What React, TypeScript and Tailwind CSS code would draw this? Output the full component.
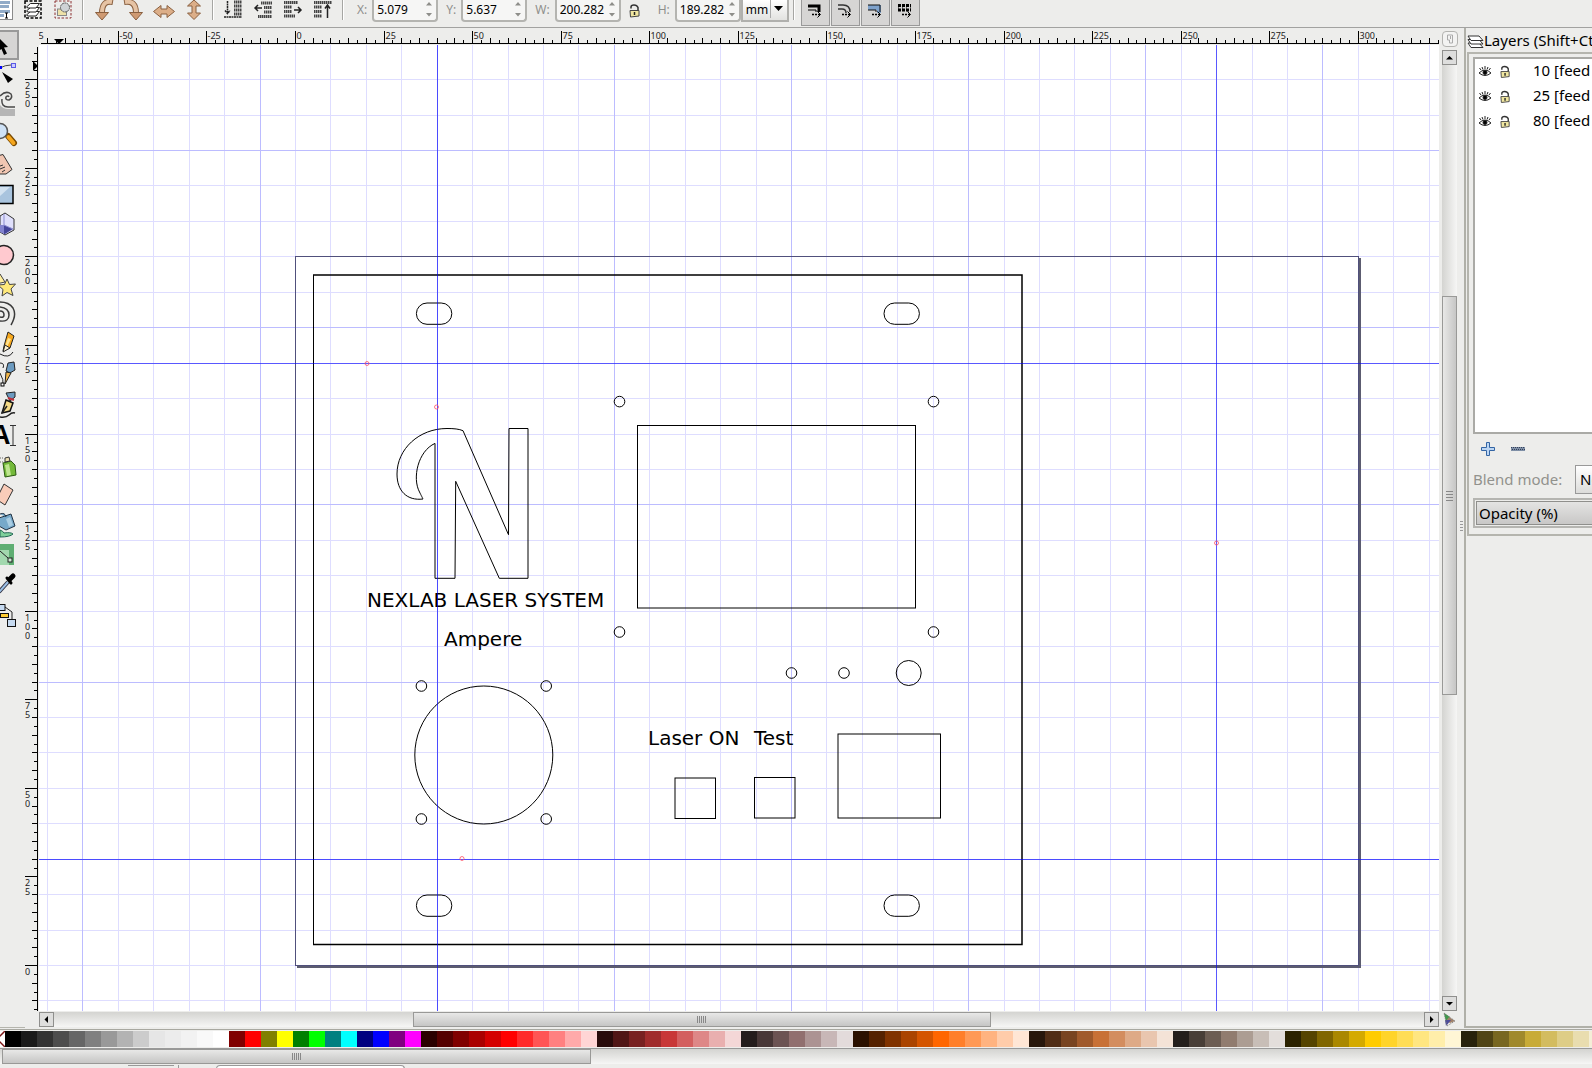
// Vector editor window: tool controls, toolbox, drawing canvas, layers dock and palette.

import { Fragment } from "react";
import type { ReactNode } from "react";

const PX_PER_MM = 3.543;
const ORIGIN_X = 256.5;
const PAGE_TOP = 211.85;
const PAGE_HEIGHT_MM = 200;
const SANS = "font-['Noto_Sans','Open_Sans',sans-serif]";

const SWATCHES = [
  "#000000", "#1a1a1a", "#333333", "#4d4d4d", "#666666", "#808080", "#999999", "#b3b3b3",
  "#cccccc", "#e6e6e6", "#ececec", "#f2f2f2", "#f9f9f9", "#ffffff",
  "#800000", "#ff0000", "#808000", "#ffff00", "#008000", "#00ff00",
  "#008080", "#00ffff", "#000080", "#0000ff", "#800080", "#ff00ff",
  "#2b0000", "#550000", "#800000", "#aa0000", "#d40000", "#ff0000", "#ff2a2a", "#ff5555",
  "#ff8080", "#ffaaaa", "#ffd5d5",
  "#280b0b", "#501616", "#782121", "#a02c2c", "#c83737", "#d35f5f", "#de8787", "#e9afaf", "#f4d7d7",
  "#241c1c", "#483737", "#6c5353", "#916f6f", "#ac9393", "#c8b7b7", "#e3dbdb",
  "#2b1100", "#552200", "#803300", "#aa4400", "#d45500", "#ff6600", "#ff7f2a", "#ff9955",
  "#ffb380", "#ffccaa", "#ffe6d5",
  "#28170b", "#502d16", "#784421", "#a05a2c", "#c87137", "#d38d5f", "#deaa87", "#e9c6af", "#f4e3d7",
  "#241f1c", "#483e37", "#6c5d53", "#917c6f", "#ac9d93", "#c8beb7", "#e3dedb",
  "#2b2200", "#554400", "#806600", "#aa8800", "#d4aa00", "#ffcc00", "#ffd42a", "#ffdd55",
  "#ffe680", "#ffeeaa", "#fff6d5",
  "#28220b", "#504416", "#786721", "#a0892c", "#c8ab37", "#d3bc5f", "#decd87", "#e9ddaf", "#f4eed7",
];

function range(from: number, to: number) {
  return Array.from({ length: to - from + 1 }, (_, i) => from + i);
}

function xOf(mm: number) {
  return Math.floor(ORIGIN_X + mm * PX_PER_MM) + 0.5;
}

function yOf(mm: number) {
  return Math.floor(PAGE_TOP + (PAGE_HEIGHT_MM - mm) * PX_PER_MM) + 0.5;
}

/* ---------- top tool controls ---------- */

function ToolbarIcon({ label, children }: { label: string; children: ReactNode }) {
  return (
    <button type="button" aria-label={label} className="flex h-[22px] w-[30px] shrink-0 justify-center">
      <svg width="24" height="21" viewBox="-2 0 24 21" fill="none">
        {children}
      </svg>
    </button>
  );
}

function ToolbarSeparator() {
  return (
    <div className="flex h-5 w-[10px] shrink-0 justify-center">
      <div className="w-0.5 border-l border-[#a6a6a3] bg-white" />
    </div>
  );
}

function NumberField({ id, label, value }: { id: string; label: string; value: string }) {
  return (
    <div className="flex shrink-0 items-start gap-[5px]">
      <label htmlFor={id} className="h-[22px] text-xs leading-[19px] text-[#8f8f8b]">
        {label}
      </label>
      <div className="flex h-[22px] w-[66px] rounded-b-sm border-2 border-t-0 border-[#b4b4b0] bg-[#f6f6f5]">
        <input
          id={id}
          defaultValue={value}
          className="h-[19px] w-[50px] bg-transparent pl-[3px] text-xs text-black outline-none"
        />
        <svg width="12" height="19" viewBox="0 0 12 19" fill="#8e8e8a" aria-hidden>
          <path d="M2 5.500h6L5 2zM2 13h6L5 16.500z" />
        </svg>
      </div>
    </div>
  );
}

function LockGlyph() {
  return (
    <>
      <path d="M2 4.500V3q0-2 3-2T9 3.500v3" stroke="#333" strokeWidth="1.500" fill="none" />
      <path d="M1 6.500h9v5.500L1.500 13z" fill="#f1e7a0" stroke="#444" />
      <path d="M5.500 8v3" stroke="#222" strokeWidth="1.500" />
    </>
  );
}

function StackIcon({ direction }: { direction: "bottom" | "down" | "up" | "top" }) {
  return (
    <>
      <g stroke="#444" strokeWidth="3" strokeDasharray="1.500 0.500">
        {direction === "bottom" && <path d="M11 2h8M11 6h8M11 10h8M11 14h8" />}
        {direction === "down" && <path d="M8 3h11M11 7.500h8M11 12h8M5 16.500h14" />}
        {direction === "up" && <path d="M1 2.500h14M1 7h8M1 11.500h8M1 16h11" />}
        {direction === "top" && <path d="M1 2.500h18M1 7h8M1 11.500h8M1 16h8" />}
      </g>
      <g stroke="#222" strokeWidth="1.500">
        {direction === "bottom" && (
          <path d="M4.500 1v12M2 10.500l2.500 3 2.500-3M1 17h18" strokeDasharray="2 0.500" />
        )}
        {direction === "down" && <path d="M9 8H2M5 5L2 8l3 3" />}
        {direction === "up" && <path d="M11 10h7M15 7l3 3-3 3" />}
        {direction === "top" && <path d="M14.500 18V6M12 8.500L14.500 5 17 8.500" />}
      </g>
    </>
  );
}

function TransformToggle({ label, children }: { label: string; children: ReactNode }) {
  return (
    <button
      type="button"
      aria-label={label}
      aria-pressed
      className="mr-px flex h-[26px] w-[29px] shrink-0 items-start justify-center border border-t-0 border-[#999] bg-[#d6d5d4] pt-[3px]"
    >
      <svg width="16" height="16" viewBox="0 0 16 16" fill="none">
        {children}
        <path d="M5 11.500h9" stroke="#000" strokeWidth="1.500" strokeDasharray="2 1" />
        <path d="M10.500 8.500l3 3-3 3" stroke="#000" />
      </svg>
    </button>
  );
}

function ToolControls() {
  return (
    <header className="flex h-7 shrink-0 items-start overflow-hidden border-b border-[#a2a2a0]">
      <button
        type="button"
        aria-label="Edit text"
        className="h-5 w-[13px] shrink-0 border border-l-0 border-t-0 border-[#8b8b8b] bg-white"
      >
        <svg width="12" height="19" viewBox="0 0 12 19">
          <path d="M0 1h10v3H0zM0 5h9v3H0zM0 10h10v3H0zM0 14h4v3H0z" fill="#91abc8" />
          <path d="M6.500 13v5M5 13h3M5 18h3" stroke="#000" />
        </svg>
      </button>
      <div className="w-[5px] shrink-0" />
      <ToolbarIcon label="Select all in layers">
        <rect x="2" y="1" width="16" height="17" stroke="#000" strokeDasharray="3 1.500" strokeWidth="1.500" />
        <g fill="#fff" stroke="#222">
          <path d="M3.500 15l4-3.500h9L13 16H5z" />
          <path d="M3.500 11l4-3.500h9L13 12H5z" />
          <path d="M3.500 7l4-3.500h9L13 8H5z" />
        </g>
      </ToolbarIcon>
      <ToolbarIcon label="Deselect">
        <rect x="2" y="1" width="16" height="17" stroke="#8c3030" strokeDasharray="2.500 1.500" />
        <rect x="4.500" y="9" width="9" height="6.500" fill="#efe2a8" stroke="#888" />
        <circle cx="12" cy="7.500" r="4.500" fill="#cfd3d6" stroke="#555" strokeDasharray="2 0.500" />
      </ToolbarIcon>
      <ToolbarSeparator />
      <ToolbarIcon label="Rotate left">
        <path d="M20 2Q9 0 9 13" stroke="#8a6040" strokeWidth="6" />
        <path d="M19 2Q9 0 9 13" stroke="#e6c3a4" strokeWidth="4" />
        <path d="M2.500 12.500h13L9 20z" fill="#cf9a72" stroke="#8a6040" />
      </ToolbarIcon>
      <ToolbarIcon label="Rotate right">
        <path d="M1 2q12-2 12 11" stroke="#8a6040" strokeWidth="6" />
        <path d="M2 2q11-2 11 11" stroke="#e6c3a4" strokeWidth="4" />
        <path d="M6.500 12.500h13L13 20z" fill="#cf9a72" stroke="#8a6040" />
      </ToolbarIcon>
      <ToolbarIcon label="Flip horizontal">
        <path d="M.5 11.500l7.500-6V9h6V5.500l7.500 6-7.500 6V14H8v3.500z" fill="#dcae88" stroke="#8a6040" />
      </ToolbarIcon>
      <ToolbarIcon label="Flip vertical">
        <path d="M11 0l6.500 6H13v7h4.500L11 19.500 4.500 13H9V6H4.500z" fill="#dcae88" stroke="#8a6040" />
      </ToolbarIcon>
      <ToolbarSeparator />
      <ToolbarIcon label="Lower to bottom"><StackIcon direction="bottom" /></ToolbarIcon>
      <ToolbarIcon label="Lower"><StackIcon direction="down" /></ToolbarIcon>
      <ToolbarIcon label="Raise"><StackIcon direction="up" /></ToolbarIcon>
      <ToolbarIcon label="Raise to top"><StackIcon direction="top" /></ToolbarIcon>
      <ToolbarSeparator />
      <div className="ml-[9px] flex shrink-0 items-start gap-2">
        <NumberField id="pos-x" label="X:" value="5.079" />
        <NumberField id="pos-y" label="Y:" value="5.637" />
        <NumberField id="size-w" label="W:" value="200.282" />
        <button type="button" aria-label="Lock ratio" className="h-[22px] w-[21px]">
          <svg width="12" height="14" viewBox="0 0 12 14"><LockGlyph /></svg>
        </button>
        <div className="flex">
          <NumberField id="size-h" label="H:" value="189.282" />
          <div className="relative h-[22px] w-12 border-2 border-t-0 border-[#b0b0ad] bg-gradient-to-b from-white to-[#e2e2e0]">
            <select
              aria-label="Unit"
              className="block h-[19px] w-full appearance-none pl-[3px] text-xs leading-[19px] text-black outline-none"
            >
              <option>mm</option>
              <option>px</option>
            </select>
            <svg className="pointer-events-none absolute right-0 top-0" width="18" height="18" viewBox="0 0 18 18">
              <path d="M1.500 0v18" stroke="#aaa" />
              <path d="M5 6h9l-4.500 5z" fill="#000" />
            </svg>
          </div>
        </div>
      </div>
      <ToolbarSeparator />
      <div className="w-0.5 shrink-0" />
      <TransformToggle label="Scale stroke width">
        <path d="M1 3h11v6" stroke="#000" strokeWidth="3" />
        <path d="M1 7h8v2" stroke="#000" />
      </TransformToggle>
      <TransformToggle label="Scale rounded corners">
        <path d="M1 2h5q7 0 7 7M1 6h4q4 0 4 4" stroke="#333" strokeWidth="1.500" />
      </TransformToggle>
      <TransformToggle label="Move gradients">
        <path d="M1 2h13v8h-4V7H1z" fill="#7fa2cb" />
        <path d="M1 2h12v7M1 7h8v2" stroke="#111" />
      </TransformToggle>
      <TransformToggle label="Move patterns">
        <path d="M1 2.500h13M1 7h13" stroke="#000" strokeWidth="3" strokeDasharray="3 1" />
        <path d="M1 5h13" stroke="#000" strokeDasharray="1 3" />
      </TransformToggle>
    </header>
  );
}

/* ---------- toolbox ---------- */

// Glyphs are drawn in a 19x30 cell: the left half of the bar runs off the window.
const TOOLS: { name: string; glyph: ReactNode }[] = [
  { name: "Select", glyph: <path d="M0 9l8 8-4 .5 3 6-3 1.500-2.500-6-1.500 1z" fill="#000" /> },
  {
    name: "Edit nodes",
    glyph: (
      <>
        <path d="M0 8q5-3 11-3" stroke="#444" />
        <rect x="11.500" y="3.500" width="4" height="4" fill="#ccf" stroke="#5a5ae6" />
        <path d="M0 6h2v3H0z" fill="#00f" />
        <path d="M2 12l11 7-5 4z" fill="#000" />
      </>
    ),
  },
  {
    name: "Tweak",
    glyph: (
      <>
        <path d="M0 15q3 4 8 4h7v7H0z" fill="#b5b5b5" />
        <path d="M0 6q6-6 11-2 2 4-2 6-4 0-3-3 2-2 3 0M2 9q-1 8 6 8h7" stroke="#4a4a4a" strokeWidth="1.500" />
      </>
    ),
  },
  {
    name: "Zoom",
    glyph: (
      <>
        <path d="M8 16l6 7" stroke="#7a4a00" strokeWidth="6" strokeLinecap="round" />
        <path d="M8.500 17l5 6" stroke="#f5a61d" strokeWidth="4" strokeLinecap="round" />
        <circle cx="0" cy="11" r="7.500" fill="#cfe2f6" stroke="#555" strokeWidth="1.500" />
      </>
    ),
  },
  {
    name: "Measure",
    glyph: (
      <>
        <path d="M-1 5.500L3 4.500l9 15-6 4.500H-1z" fill="#f1c6b2" stroke="#333" />
        <path d="M0 16l3-1M0 19l5-2M2 22l3-2" stroke="#333" />
      </>
    ),
  },
  {
    name: "Rectangle",
    glyph: (
      <>
        <path d="M-1 5.500h14v18H-1z" fill="#a9c4de" stroke="#000" strokeWidth="1.500" />
        <path d="M0 7h10L0 16z" fill="#d3e2f0" />
      </>
    ),
  },
  {
    name: "3D box",
    glyph: (
      <>
        <path d="M0 6l5-3 9 6v11l-9 5-5-3z" fill="#e0e0fb" stroke="#333" />
        <path d="M0 15h4v9l-4-2z" fill="#8383cf" />
        <path d="M4 15l9 4-8 5H4z" fill="#45459a" />
        <path d="M4 4v11l9 4" stroke="#8d8dd0" />
      </>
    ),
  },
  { name: "Ellipse", glyph: <circle cx="4" cy="15" r="9.500" fill="#ffc9cf" stroke="#222" strokeWidth="1.500" /> },
  {
    name: "Star",
    glyph: (
      <>
        <path d="M-4 14l4-10 5 8z" fill="#ffee9c" stroke="#444" />
        <path d="M7 9l2.500 5.500 6-.5-4.500 5 2 6.500-6-3-5 3.500 1-6.500-5-4.500 6.500-.5z" fill="#ffe97a" stroke="#444" />
      </>
    ),
  },
  {
    name: "Spiral",
    glyph: <path d="M0 17q4 1 4-2 0-4-4-4M0 21q9 1 9-6T0 7M11 25q6-10 2-17-4-6-13-6" stroke="#3a3a3a" strokeWidth="1.500" />,
  },
  {
    name: "Pencil",
    glyph: (
      <>
        <path d="M4 16L8 2l6 4-4 12-7 3z" fill="#f7a81c" stroke="#222" />
        <path d="M8 8l3 1-4 8-2-1z" fill="#ffe28c" />
        <path d="M5 15l5 3-7 4z" fill="#fff1cf" stroke="#222" />
        <path d="M0 24q9 5 13-2" stroke="#222" />
      </>
    ),
  },
  {
    name: "Bezier",
    glyph: (
      <>
        <path d="M8 3l6-1 1 8-5 3-4-2z" fill="#6c9bc0" stroke="#222" />
        <path d="M6 12l5 1-6 11z" fill="#f2b749" stroke="#222" />
        <path d="M0 3q5 0 3 5M0 13q4 7 3 12" stroke="#222" />
        <rect x="1" y="23" width="3" height="3" fill="#fff" stroke="#000" />
      </>
    ),
  },
  {
    name: "Calligraphy",
    glyph: (
      <>
        <path d="M6 3l9-1v5l-5 4z" fill="#6c9bc0" stroke="#222" />
        <path d="M8 8l6 2" stroke="#c22f3a" strokeWidth="2" />
        <path d="M6 10l7 3-3 8-8 2z" fill="#f6dc87" stroke="#111" strokeWidth="1.500" />
        <path d="M2 23l5-7M0 27q6 1 9-2t6-2" stroke="#222" strokeWidth="1.500" />
      </>
    ),
  },
  {
    name: "Text",
    glyph: (
      <>
        <text x="-9" y="24" className="font-['Liberation_Sans',sans-serif] text-[27px] font-bold" fill="#000">A</text>
        <path d="M13 6v19M10 5.500h6M10 25.500h6" stroke="#333" />
      </>
    ),
  },
  {
    name: "Spray",
    glyph: (
      <>
        <path d="M3 13l8-2 4 4 1 10-11 2z" fill="#74b93a" stroke="#2c5a12" />
        <path d="M5 15l4-1 2 11-4 1z" fill="#bfe58f" />
        <path d="M5 8l4-1 1 4-5 1z" fill="#eadcae" stroke="#333" />
        <path d="M0 8h3M0 12h3" stroke="#666" strokeDasharray="1 1" />
      </>
    ),
  },
  { name: "Eraser", glyph: <path d="M4 4l9 6-8 15-6-4v-7z" fill="#f9ccb9" stroke="#333" /> },
  {
    name: "Bucket",
    glyph: (
      <>
        <path d="M0 20q3 1 4 3 7-1 9 1-3 3-13 3z" fill="#7ed09a" stroke="#265" />
        <path d="M0 4q5-2 6 3M-1 8l12-4 4 12-9 4-7-4z" fill="#77a9ca" stroke="#234" />
        <path d="M6 9l4-2 3 8-4 2z" fill="#a9cde2" />
      </>
    ),
  },
  {
    name: "Gradient",
    glyph: (
      <>
        <path d="M0 4h14v21H0z" fill="#5fae72" />
        <path d="M0 10h9v15H0z" fill="#a2d8ae" />
        <path d="M0 11l8 7" stroke="#222" />
        <rect x="8" y="18" width="4" height="4" fill="#cfe8d4" stroke="#222" />
      </>
    ),
  },
  {
    name: "Dropper",
    glyph: (
      <>
        <path d="M-1 22l9-10" stroke="#334" strokeWidth="4" />
        <path d="M-1 22l9-10" stroke="#9cc0e6" strokeWidth="2" />
        <path d="M7 8l4 5" stroke="#000" strokeWidth="3" strokeLinecap="round" />
        <path d="M10 9l3-3" stroke="#000" strokeWidth="5" strokeLinecap="round" />
      </>
    ),
  },
  {
    name: "Connector",
    glyph: (
      <>
        <path d="M5 7l7 5v8" stroke="#222" />
        <rect x="-2" y="4.500" width="7" height="6" fill="#c6daf0" stroke="#111" />
        <rect x="0.500" y="13.500" width="8" height="4" fill="#fc3" stroke="#111" />
        <rect x="7.500" y="19.500" width="8" height="7" fill="#c6daf0" stroke="#111" />
      </>
    ),
  },
];

function Toolbox() {
  return (
    <nav aria-label="Toolbox" className="flex w-[25px] shrink-0 flex-col border-b border-[#b5b5ad] pt-0.5">
      {TOOLS.map((tool, index) => (
        <button
          key={tool.name}
          type="button"
          aria-label={tool.name}
          className={
            index === 0
              ? "h-[30px] w-[19px] border-2 border-l-0 border-[#999] bg-[#d6d5d4]"
              : "h-[30px] w-[19px]"
          }
        >
          <svg width="19" height="30" viewBox="0 0 19 30" fill="none" className={index === 0 ? "-mt-0.5" : ""}>
            {tool.glyph}
          </svg>
        </button>
      ))}
    </nav>
  );
}

/* ---------- rulers and canvas ---------- */

function HorizontalRuler() {
  return (
    <svg className={`h-full w-full overflow-hidden ${SANS} text-[9px]`} aria-label="Horizontal ruler">
      <line x1="2" y1="15.500" x2="100%" y2="15.500" stroke="#000" shapeRendering="crispEdges" />
      {range(-30, 129).map((n) => {
        const x = xOf(n * 2.5);
        const major = n % 10 === 0;
        const top = major ? 3 : n % 2 === 0 ? 10 : 12;
        return (
          <Fragment key={n}>
            <line x1={x} y1={top} x2={x} y2="15" stroke="#000" shapeRendering="crispEdges" />
            {major && <text x={x + 1} y="11" fill="#222">{n * 2.5}</text>}
          </Fragment>
        );
      })}
      <path d="M15 11h10l-5 5z" fill="#000" />
    </svg>
  );
}

function VerticalRuler() {
  return (
    <svg className={`h-full w-full overflow-hidden ${SANS} text-[9px]`} aria-label="Vertical ruler">
      <line x1="12.500" y1="2" x2="12.500" y2="100%" stroke="#000" shapeRendering="crispEdges" />
      {range(-5, 103).map((n) => {
        const y = yOf(n * 2.5);
        const major = n % 10 === 0;
        const left = major ? 0 : n % 2 === 0 ? 7 : 9;
        return (
          <Fragment key={n}>
            <line x1={left} y1={y} x2="12" y2={y} stroke="#000" shapeRendering="crispEdges" />
            {major &&
              String(n * 2.5)
                .split("")
                .map((digit, i) => (
                  <text key={i} x="0" y={y + 9 + i * 9} fill="#222">{digit}</text>
                ))}
          </Fragment>
        );
      })}
      <path d="M8 16v10l5-5z" fill="#000" />
    </svg>
  );
}

function Grid() {
  return (
    <g shapeRendering="crispEdges">
      {[false, true].map((major) => (
        <g key={String(major)} stroke={major ? "#bcbcff" : "#deddff"}>
          {range(-7, 32)
            .filter((n) => ((n + 1) % 5 === 0) === major)
            .map((n) => (
              <line key={`x${n}`} x1={xOf(n * 10)} y1="0" x2={xOf(n * 10)} y2="100%" />
            ))}
          {range(-2, 26)
            .filter((n) => ((n - 3) % 5 === 0) === major)
            .map((n) => (
              <line key={`y${n}`} x1="0" y1={yOf(n * 10)} x2="100%" y2={yOf(n * 10)} />
            ))}
        </g>
      ))}
    </g>
  );
}

const HOLES = [
  [580.5, 356.6, 5.3], [894.5, 356.6, 5.3], [580.5, 587, 5.3], [894.5, 587, 5.3],
  [752.5, 628, 5.3], [805, 628, 5.3], [869.7, 628, 12.5],
  [382.4, 641, 5.3], [507.2, 641, 5.3], [382.4, 774, 5.3], [507.2, 774, 5.3],
  [444.8, 710, 69],
];

const SLOTS = [[377.4, 258], [845, 258], [377.4, 850], [845, 850]];

const GUIDE_ANCHORS = [[328, 318.5], [397.5, 362], [423, 813.5], [1177.5, 498]];

function Canvas() {
  return (
    <svg className="h-full w-full overflow-hidden bg-white" aria-label="Drawing">
      <Grid />
      <g shapeRendering="crispEdges">
        <path d="M1321 213v709H258" fill="none" stroke="#5c5c70" strokeWidth="2" />
        <rect x="256.500" y="211.500" width="1063" height="709" fill="none" stroke="#50507c" />
      </g>
      <g fill="none" stroke="#000">
        <path d="M274.500 900V230" />
        <path d="M274 230h709v669.500H274" strokeWidth="1.500" />
        {SLOTS.map(([x, y]) => (
          <rect key={`${x}-${y}`} x={x} y={y} width="35.400" height="21.300" rx="10.600" />
        ))}
        {HOLES.map(([x, y, r]) => (
          <circle key={`${x}-${y}`} cx={x} cy={y} r={r} />
        ))}
        <rect x="598.500" y="380.500" width="278" height="182.500" />
        <rect x="636" y="733" width="40.500" height="40.500" />
        <rect x="715.500" y="732.500" width="40.500" height="40.500" />
        <rect x="799" y="689" width="102.500" height="84" />
        <path d="M424 385.700L469.500 489.700L470 383.500H489V533.300H460.300L416.700 436.300L416 533.300H396V398.400C379 406 373 433 380.500 447C382 450 384 454 384 454C368 456 358 446 358 429C358 404 380 383.500 408 383.500C415 383.500 420 384 424 385.700Z" />
      </g>
      <g className="font-['DejaVu_Sans',sans-serif] text-[20px]" fill="#000">
        <text x="328" y="562">NEXLAB LASER SYSTEM</text>
        <text x="405" y="601">Ampere</text>
        <text x="609" y="700">Laser ON</text>
        <text x="715" y="700">Test</text>
      </g>
      <g stroke="#0000ff" strokeOpacity="0.600" shapeRendering="crispEdges">
        <line x1={xOf(40)} y1="0" x2={xOf(40)} y2="100%" />
        <line x1={xOf(260)} y1="0" x2={xOf(260)} y2="100%" />
        <line x1="0" y1={yOf(170)} x2="100%" y2={yOf(170)} />
        <line x1="0" y1={yOf(30)} x2="100%" y2={yOf(30)} />
      </g>
      <g fill="none" stroke="#ff5566" strokeOpacity="0.800">
        {GUIDE_ANCHORS.map(([x, y]) => (
          <circle key={x} cx={x} cy={y} r="2" />
        ))}
      </g>
    </svg>
  );
}

/* ---------- scrollbars ---------- */

const ARROWS = {
  up: "M3 8.500h7L6.500 5z",
  down: "M3 5h7L6.500 8.500z",
  left: "M8 3v7L4.500 6.500z",
  right: "M5 3v7l3.500-3.500z",
};

function ScrollButton({ direction }: { direction: keyof typeof ARROWS }) {
  return (
    <button
      type="button"
      aria-label={`Scroll ${direction}`}
      className="h-[15px] w-[15px] shrink-0 border border-[#8f8f8d] bg-[#dededd]"
    >
      <svg width="13" height="13" viewBox="0 0 13 13"><path d={ARROWS[direction]} fill="#000" /></svg>
    </button>
  );
}

const H_THUMB =
  "flex items-center justify-center border border-[#999997] bg-gradient-to-b from-[#e8e8e7] to-[#c6c6c5]";

function HorizontalGrip() {
  return (
    <div className="flex h-[7px] gap-px">
      {range(1, 5).map((n) => (
        <div key={n} className="w-px bg-[#888]" />
      ))}
    </div>
  );
}

function EditorArea() {
  return (
    <main className="grid min-w-0 flex-1 grid-cols-[14px_minmax(0,1fr)_25px] grid-rows-[17px_minmax(0,1fr)_17px]">
      <div />
      <HorizontalRuler />
      <div className="row-span-2 flex">
        <div className="flex flex-1 flex-col pl-[3px] pt-[3px]">
          <button
            type="button"
            aria-label="Toggle colour management"
            className="flex h-4 w-4 shrink-0 items-center justify-center rounded-sm border border-[#b3b3b0] bg-[#f3f3f2]"
          >
            <svg width="8" height="10" viewBox="0 0 8 10" fill="none" stroke="#aaa">
              <path d="M6.500 1v8h-3V6H1.500V1z" />
              <path d="M4.500 2v3" />
            </svg>
          </button>
          <div className="mt-[3px] flex min-h-0 w-[15px] flex-1 flex-col bg-gradient-to-r from-[#d4d4d1] to-[#f6f6f5]">
            <ScrollButton direction="up" />
            <div className="flex-[231]" />
            <div className="flex flex-[397] flex-col items-center justify-center gap-0.5 border border-[#999997] bg-gradient-to-r from-[#e8e8e7] to-[#c6c6c5]">
              {range(1, 4).map((n) => (
                <div key={n} className="h-px w-[7px] bg-[#888]" />
              ))}
            </div>
            <div className="flex-[301]" />
            <ScrollButton direction="down" />
          </div>
        </div>
        <div className="flex w-1 flex-col items-start justify-center gap-0.5 pt-3">
          {range(1, 4).map((n) => (
            <div key={n} className="h-px w-[3px] bg-[#999]" />
          ))}
        </div>
      </div>
      <VerticalRuler />
      <Canvas />
      <div />
      <div className="mb-px mt-px flex h-[15px] bg-gradient-to-b from-[#d4d4d1] to-[#f6f6f5]">
        <ScrollButton direction="left" />
        <div className="flex-[359]" />
        <div className={`${H_THUMB} flex-[575]`}>
          <HorizontalGrip />
        </div>
        <div className="flex-[433]" />
        <ScrollButton direction="right" />
      </div>
      <svg width="25" height="17" viewBox="0 0 25 17" aria-hidden>
        <path d="M5 2l6 4-4 5z" fill="#3f9a4c" />
        <path d="M10 6l6 4-5 2-4-2z" fill="#a08068" />
        <path d="M6 9h6l-5 6z" fill="#4c4c9c" />
        <path d="M5 2l11 8-8 5z" fill="none" stroke="#777" strokeDasharray="1 1" />
      </svg>
    </main>
  );
}

/* ---------- layers dock ---------- */

const LAYERS = ["10 [feed", "25 [feed", "80 [feed"];

function LayersDock() {
  return (
    <aside className="w-32 shrink-0 overflow-hidden border-b-2 border-l-2 border-[#b0b0a8] pl-px text-[15px]">
      <h2 className="flex h-6 items-center whitespace-nowrap leading-6">
        <svg width="17" height="16" viewBox="0 0 17 16" fill="#fff" stroke="#333" className="mt-0.5 shrink-0">
          <path d="M1 10l3 4.500h12L12 10z" />
          <path d="M1 6.500L4 11h12l-4-4.500z" />
          <path d="M1 3l3 4.500h12L12 3z" />
        </svg>
        <span>Layers (Shift+Ctrl+L)</span>
      </h2>
      <div className="h-[484px] w-60 border-2 border-[#b5b5ae] pl-1 pt-[3px]">
        <ul className="h-[377px] border-2 border-[#aaaaa6] bg-white">
          {LAYERS.map((layer) => (
            <li key={layer} className="flex h-[25px] items-center whitespace-nowrap leading-[23px]">
              <button type="button" aria-label={`Toggle visibility of ${layer}`} className="ml-[3px] w-5">
                <svg width="14" height="14" viewBox="0 0 14 14" fill="none" stroke="#222">
                  <path d="M1 8q6-6 12 0-6 5-12 0zM3 5L1.500 3M5 4.500L4 2M7 4V1M9 4.500L10 2M11 5l1.500-2" />
                  <circle cx="7" cy="7.500" r="2" fill="#000" />
                </svg>
              </button>
              <button type="button" aria-label={`Lock ${layer}`} className="ml-0.5 w-[33px]">
                <svg width="11" height="14" viewBox="0 0 12 14"><LockGlyph /></svg>
              </button>
              <span className="h-[25px]">{layer}</span>
            </li>
          ))}
        </ul>
        <div className="flex h-[30px] items-center gap-4 pl-2">
          <button type="button" aria-label="Add layer">
            <svg width="14" height="14" viewBox="0 0 14 14">
              <path d="M5.500 .5h3v5h5v3h-5v5h-3v-5h-5v-3h5z" fill="#bcd6f3" stroke="#3465a4" />
            </svg>
          </button>
          <button type="button" aria-label="Remove layer">
            <svg width="14" height="14" viewBox="0 0 14 14">
              <rect x="0" y="5" width="14" height="4" fill="#7f8fa6" />
              <path d="M0 5.500h14M1 7.500h13" stroke="#34415a" strokeDasharray="1 1" />
            </svg>
          </button>
        </div>
        <div className="flex h-[30px] items-center">
          <label htmlFor="blend-mode" className="w-[102px] whitespace-nowrap text-[#92928d]">
            Blend mode:
          </label>
          <select
            id="blend-mode"
            className="h-[29px] w-28 appearance-none border border-[#999] bg-gradient-to-b from-white to-[#dcdcda] pl-1 text-black"
          >
            <option>Normal</option>
          </select>
        </div>
        <div className="mt-1 h-[30px] border-2 border-[#b5b5b1] p-px">
          <button
            type="button"
            className="h-full w-full border border-[#8f8f8c] bg-gradient-to-b from-[#e4e4e3] to-[#c8c7c6] pl-0.5 text-left leading-[22px]"
          >
            Opacity (%)
          </button>
        </div>
      </div>
    </aside>
  );
}

/* ---------- palette and status bar ---------- */

function PaletteBar() {
  return (
    <footer className="shrink-0 pt-px">
      <div className="flex overflow-hidden border-y border-b-[#999] border-t-[#a8a8a0] pb-px pt-px">
        <button type="button" aria-label="No colour" className="h-4 w-[5px] shrink-0 bg-white">
          <svg width="5" height="16" viewBox="0 0 5 16">
            <path d="M-1 6l6-6M-1 10l6 6" stroke="#7a1515" strokeWidth="1.500" />
          </svg>
        </button>
        {SWATCHES.map((color, index) => (
          <button
            key={index}
            type="button"
            aria-label={color}
            className="h-4 w-4 shrink-0"
            style={{ backgroundColor: color }}
          />
        ))}
      </div>
      <div className="flex h-[15px] bg-gradient-to-b from-[#d4d4d1] to-[#f6f6f5] pl-0.5">
        <div className={`${H_THUMB} flex-[587]`}>
          <HorizontalGrip />
        </div>
        <div className="flex-[1001]" />
      </div>
      <div className="flex h-1 items-start overflow-hidden pt-px">
        <div className="ml-32 h-1 w-[46px] border-t border-[#999]" />
        <div className="ml-1 h-1 w-px bg-[#999]" />
        <div className="ml-[37px] h-1 w-[189px] rounded-t-sm border border-[#999] bg-white" />
      </div>
    </footer>
  );
}

export default function App() {
  return (
    <div className={`flex h-screen flex-col overflow-hidden bg-[#ededeb] text-black ${SANS}`}>
      <ToolControls />
      <div className="flex min-h-0 flex-1">
        <Toolbox />
        <EditorArea />
        <LayersDock />
      </div>
      <PaletteBar />
    </div>
  );
}
